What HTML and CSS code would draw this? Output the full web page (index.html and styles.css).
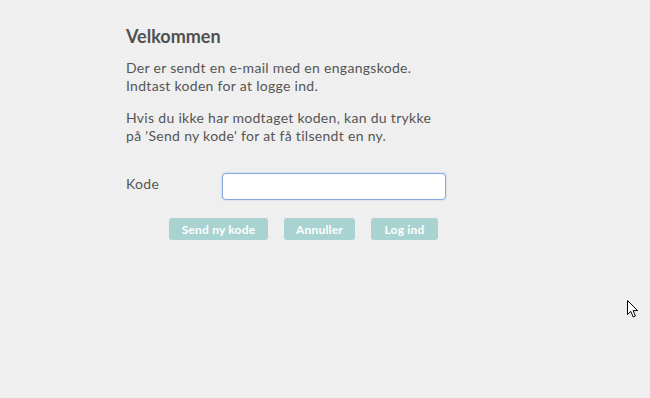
FILE: index.html
```html
<!DOCTYPE html>
<html>
<head>
	<title>Velkommen</title>
	<meta http-equiv="content-type" content="text/html; charset=utf-8" />
	<link rel="stylesheet" href="styles.css">
</head>
<body>
	<div class="box">
		<h1>Velkommen</h1>
		<p>Der er sendt en e-mail med en engangskode.<br>Indtast koden for at logge ind.</p>
		<p>Hvis du ikke har modtaget koden, kan du trykke<br>på 'Send ny kode' for at få tilsendt en ny.</p>

		<div class="row">
			<label for="code">Kode</label>
			<input id="code" type="text">
		</div>

		<div class="buttons">
			<button class="send">Send ny kode</button>
			<button class="cancel">Annuller</button>
			<button class="login">Log ind</button>
		</div>
	</div>

	<svg class="cursor" width="14" height="20" viewBox="0 0 14 20">
		<path d="M1.5 1.5 L1.5 15.5 L4.8 12.4 L7.2 18 L9.4 17 L7.1 11.6 L11.6 11.6 Z" fill="#fff" stroke="#000" stroke-width="1" stroke-linejoin="miter"/>
	</svg>
</body>
</html>
```

FILE: styles.css
```css
body {
	background:#efefef;
	margin:0;
	font-family:Lato, "Noto Sans", sans-serif;
	color:#555;
	width:650px;
	height:398px;
	overflow:hidden;
}

.box {
	margin-left:126px;
	padding-top:25px;
	width:330px;
}

h1 {
	font-size:18px;
	font-weight:bold;
	margin:0 0 12px 0;
	color:#505050;
}

p {
	font-size:14px;
	line-height:18px;
	letter-spacing:0.3px;
	margin:0 0 14px 0;
}

.row {
	display:flex;
	align-items:center;
	margin-top:28px;
}

label {
	font-size:14px;
	letter-spacing:0.3px;
	width:96px;
	margin-top:-6px;
}

input {
	width:224px;
	height:27px;
	box-sizing:border-box;
	border:1px solid #86a8e0;
	border-radius:4px;
	background:#fff;
	box-shadow:0 0 2px rgba(100,140,220,0.4);
	outline:none;
}

.buttons {
	display:flex;
	gap:16px;
	margin:18px 0 0 43px;
}

button {
	background:#a9d3d1;
	border:none;
	border-radius:3px;
	color:#fff;
	font-family:Lato, "Noto Sans", sans-serif;
	font-weight:bold;
	font-size:12px;
	letter-spacing:0.2px;
	height:22px;
	padding:0;
}

.send { width:99px; }
.cancel { width:71px; }
.login { width:67px; }

.cursor {
	position:absolute;
	left:626px;
	top:299px;
}
```
